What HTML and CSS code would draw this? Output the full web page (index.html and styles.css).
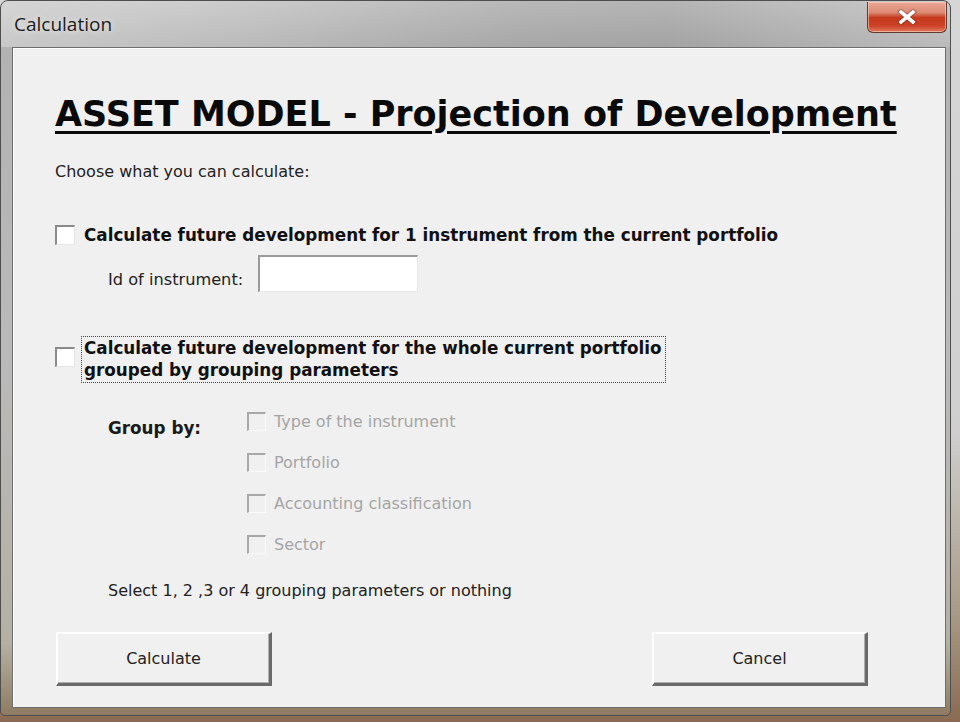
FILE: index.html
```html
<!DOCTYPE html>
<html lang="en">
<head>
<meta charset="utf-8">
<title>Calculation</title>
<link rel="stylesheet" href="styles.css">
</head>
<body>
<div class="desktop">
  <div class="window">
    <div class="titlebar">
      <span class="title">Calculation</span>
      <button class="close" aria-label="Close">
        <svg width="22" height="16" viewBox="0 0 22 16"><path d="M5 3 L17 13 M17 3 L5 13" stroke="#5a1a10" stroke-width="5.4" stroke-linecap="square" opacity="0.45"/><path d="M5 3 L17 13 M17 3 L5 13" stroke="#fff" stroke-width="3.6" stroke-linecap="square"/></svg>
      </button>
    </div>
    <div class="client">
      <h1 class="heading">ASSET MODEL - Projection of Development</h1>
      <p class="intro">Choose what you can calculate:</p>

      <div class="option">
        <span class="check"></span>
        <span class="option-label">Calculate future development for 1 instrument from the current portfolio</span>
      </div>
      <div class="id-row">
        <span class="id-label">Id of instrument:</span>
        <span class="textbox"></span>
      </div>

      <div class="option option-two">
        <span class="check"></span>
        <span class="option-label focus">Calculate future development for the whole current portfolio<br>grouped by grouping parameters</span>
      </div>

      <div class="group">
        <span class="group-label">Group by:</span>
        <div class="group-list">
          <div class="sub"><span class="check disabled"></span><span>Type of the instrument</span></div>
          <div class="sub"><span class="check disabled"></span><span>Portfolio</span></div>
          <div class="sub"><span class="check disabled"></span><span>Accounting classification</span></div>
          <div class="sub"><span class="check disabled"></span><span>Sector</span></div>
        </div>
      </div>

      <p class="hint">Select 1, 2 ,3 or 4 grouping parameters or nothing</p>

      <div class="buttons">
        <button class="btn">Calculate</button>
        <button class="btn">Cancel</button>
      </div>
    </div>
  </div>
</div>
</body>
</html>
```

FILE: styles.css
```css
html, body {
  margin: 0;
  padding: 0;
}
body {
  width: 960px;
  height: 722px;
  overflow: hidden;
}
.desktop {
  width: 960px;
  height: 722px;
  background: linear-gradient(180deg, #d6d6d6 0%, #cfcfcf 60%, #a89a86 85%, #8a6a52 100%);
}
.window {
  width: 951px;
  height: 716px;
  box-sizing: border-box;
  border-radius: 8px 8px 5px 5px;
  border: 1px solid #4e4e4e;
  background: linear-gradient(180deg, #c4c4c4 0%, #b2b2b2 6%, #bababa 50%, #b4b0a4 90%, #8e7c62 100%);
  padding: 0 4px 7px 11px;
  display: flex;
  flex-direction: column;
  font-family: "DejaVu Sans", sans-serif;
}
.titlebar {
  height: 46px;
  display: flex;
  justify-content: space-between;
  align-items: flex-start;
  background: linear-gradient(90deg, rgba(255,255,255,0.3) 0%, rgba(255,255,255,0.12) 25%, rgba(0,0,0,0.06) 55%, rgba(0,0,0,0.08) 70%, rgba(255,255,255,0.12) 100%);
  margin: 0 -4px 0 -11px;
  padding: 0 3px 0 13px;
  border-radius: 7px 7px 0 0;
}
.title {
  font-family: "Open Sans", "DejaVu Sans", sans-serif;
  font-size: 19px;
  color: #1c1c1c;
  line-height: 20px;
  margin-top: 13px;
  text-shadow: 0 0 6px rgba(255,255,255,0.8);
}
.close {
  width: 80px;
  height: 31px;
  margin-top: 1px;
  border: 1px solid #5e3a30;
  border-top: none;
  border-radius: 0 0 6px 6px;
  background: linear-gradient(180deg, #e8a896 0%, #dc8a74 35%, #c63a1e 52%, #cc4026 78%, #e07a5e 100%);
  box-shadow: inset 0 0 0 1px rgba(255,220,200,0.55);
  display: flex;
  align-items: center;
  justify-content: center;
  padding: 0;
}
.client {
  flex: 1;
  background: #f0f0f0;
  border: 1px solid #6e6e6e;
  box-shadow: inset 1px 1px 0 #ffffff;
  padding: 0 0 0 42px;
  display: flex;
  flex-direction: column;
  color: #1a1a1a;
  font-size: 16px;
}
.heading {
  margin: 46px 0 0 0;
  font-family: "DejaVu Sans", sans-serif;
  font-weight: bold;
  font-size: 35px;
  line-height: 40px;
  text-decoration: underline;
  text-decoration-thickness: 3px;
  text-underline-offset: 5px;
  color: #0a0a0a;
  letter-spacing: 0;
}
.intro {
  margin: 28px 0 0 0;
  line-height: 20px;
  font-size: 16px;
  color: #222;
}
.option {
  margin-top: 42px;
  display: flex;
  align-items: center;
  gap: 9px;
}
.check {
  width: 20px;
  height: 20px;
  box-sizing: border-box;
  background: #fff;
  border-style: solid;
  border-width: 2px 1px 1px 2px;
  border-color: #8a8a8a #e6e6e6 #e6e6e6 #8a8a8a;
  flex: none;
}
.check.disabled {
  width: 19px;
  height: 19px;
  background: #f0f0f0;
  border-color: #a8a8a8 #fafafa #fafafa #a8a8a8;
}
.option-label {
  font-weight: bold;
  font-size: 16.8px;
  line-height: 22px;
  color: #111;
}
.id-row {
  margin: 9px 0 0 53px;
  display: flex;
  align-items: center;
  gap: 15px;
}
.id-label {
  font-size: 16.2px;
  color: #222;
  padding-top: 11px;
}
.textbox {
  width: 160px;
  height: 37px;
  box-sizing: border-box;
  background: #fff;
  border-style: solid;
  border-width: 2px 1px 1px 2px;
  border-color: #9a9a9a #e8e8e8 #e8e8e8 #9a9a9a;
}
.option-two {
  margin-top: 45px;
  align-items: flex-start;
  gap: 7px;
}
.option-two .check {
  margin-top: 10px;
}
.focus {
  outline: 1px dotted #444;
  outline-offset: 0;
  padding: 0 4px 1px 2px;
}
.group {
  margin: 30px 0 0 53px;
  display: flex;
}
.group-label {
  width: 139px;
  font-weight: bold;
  font-size: 16.8px;
  line-height: 20px;
  margin-top: 6px;
}
.group-list {
  display: flex;
  flex-direction: column;
  gap: 22px;
}
.sub {
  display: flex;
  align-items: center;
  gap: 8px;
  color: #a5a5a5;
  font-size: 16px;
  line-height: 19px;
}
.hint {
  margin: 27px 0 0 53px;
  font-size: 16px;
  line-height: 20px;
  color: #222;
}
.buttons {
  margin: 31px 0 0 1px;
  display: flex;
  gap: 380px;
}
.btn {
  width: 216px;
  height: 54px;
  box-sizing: border-box;
  background: #f0f0f0;
  border-style: solid;
  border-width: 2px 3px 3px 2px;
  border-color: #ffffff #6a6a6a #6a6a6a #ffffff;
  box-shadow: inset -1px -1px 0 #b0b0b0;
  font-family: "DejaVu Sans", sans-serif;
  font-size: 16px;
  color: #222;
  padding: 0;
}
```
